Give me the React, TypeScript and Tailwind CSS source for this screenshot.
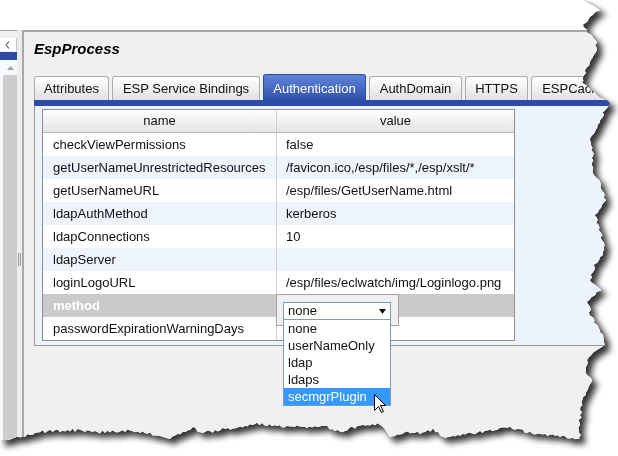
import React from "react";

function makeRng(seed: number) {
  let s = seed >>> 0;
  return () => {
    s = (Math.imul(s, 1664525) + 1013904223) >>> 0;
    return s / 4294967296;
  };
}

const RIGHT: [number, number][] = [
  [586, 0], [600, 10], [590, 17], [583, 27], [596, 40], [595, 53], [585, 73], [583, 83],
  [600, 97], [610, 103], [605, 110], [598, 125], [590, 140], [593, 158], [592, 170],
  [600, 183], [605, 200], [595, 215], [600, 230], [605, 250], [595, 265], [590, 280],
  [600, 290], [588, 302], [590, 315], [600, 330], [605, 345], [590, 355], [585, 370],
  [592, 380], [583, 400], [580, 420], [580, 440],
];

const BOTTOM: [number, number][] = [
  [580, 440], [570, 438], [530, 433], [510, 427], [480, 432], [443, 437], [433, 430],
  [420, 433], [410, 432], [390, 437], [380, 424], [350, 428], [340, 432], [327, 427],
  [287, 427], [257, 424], [233, 428], [200, 433], [193, 427], [170, 438], [150, 434],
  [130, 431], [100, 432], [70, 430], [40, 432], [20, 437], [0, 442],
];

function buildClip() {
  const rnd = makeRng(12345);
  const pts: string[] = ["0px 0px"];
  for (let i = 0; i < RIGHT.length - 1; i++) {
    const [x0, y0] = RIGHT[i];
    const [x1, y1] = RIGHT[i + 1];
    const n = Math.max(1, Math.round(Math.abs(y1 - y0) / 2.5));
    for (let k = 0; k < n; k++) {
      const t = k / n;
      const jx = (rnd() - 0.5) * 3.2;
      pts.push(`${(x0 + (x1 - x0) * t + jx).toFixed(1)}px ${(y0 + (y1 - y0) * t).toFixed(1)}px`);
    }
  }
  for (let i = 0; i < BOTTOM.length - 1; i++) {
    const [x0, y0] = BOTTOM[i];
    const [x1, y1] = BOTTOM[i + 1];
    const n = Math.max(1, Math.round(Math.abs(x1 - x0) / 2.5));
    for (let k = 0; k < n; k++) {
      const t = k / n;
      const jy = (rnd() - 0.5) * 3.2;
      pts.push(`${(x0 + (x1 - x0) * t).toFixed(1)}px ${(y0 + (y1 - y0) * t + jy).toFixed(1)}px`);
    }
  }
  pts.push("0px 442px");
  return `polygon(${pts.join(",")})`;
}

const rows: { name: string; value: string }[] = [
  { name: "checkViewPermissions", value: "false" },
  { name: "getUserNameUnrestrictedResources", value: "/favicon.ico,/esp/files/*,/esp/xslt/*" },
  { name: "getUserNameURL", value: "/esp/files/GetUserName.html" },
  { name: "ldapAuthMethod", value: "kerberos" },
  { name: "ldapConnections", value: "10" },
  { name: "ldapServer", value: "" },
  { name: "loginLogoURL", value: "/esp/files/eclwatch/img/Loginlogo.png" },
  { name: "method", value: "" },
  { name: "passwordExpirationWarningDays", value: "" },
];

const options = ["none", "userNameOnly", "ldap", "ldaps", "secmgrPlugin"];

function Sidebar() {
  return (
    <div className="w-[17px] shrink-0 flex flex-col border-t border-[#a0a0a0] bg-[#f0f0f0]">
      <div className="h-[7px]" />
      <div className="h-[13px] bg-white border-r border-[#c4c4c4] flex items-center pl-[5px]">
        <svg width="5" height="8" viewBox="0 0 5 8">
          <path d="M4 0.5 L1 4 L4 7.5" fill="none" stroke="#808080" strokeWidth="1.3" />
        </svg>
      </div>
      <div className="h-[8px] mt-[1px] bg-[#2e4ba6]" />
      <div className="flex-1 flex bg-[#f6f9fd]">
        <div className="w-[3px]" />
        <div className="flex-1 flex flex-col">
          <div className="h-[15px] flex items-center justify-center">
            <svg width="7" height="4" viewBox="0 0 7 4">
              <path d="M0 4 L3.5 0 L7 4 Z" fill="#a0a0a0" />
            </svg>
          </div>
          <div className="flex-1 bg-[#cdcdcd]" />
        </div>
      </div>
    </div>
  );
}

function Splitter() {
  return (
    <div className="w-[5px] shrink-0 flex flex-col items-center bg-[#ececec] pt-[223px]">
      <div className="flex gap-[1px]">
        <div className="w-px h-[13px] bg-[#9a9a9a]" />
        <div className="w-px h-[13px] bg-[#9a9a9a]" />
      </div>
    </div>
  );
}

function Tab({ label, w, active }: { label: string; w: string; active?: boolean }) {
  if (active) {
    return (
      <div
        className={`${w} h-[26px] pt-[2px] shrink-0 flex items-center justify-center rounded-t-[3px] border border-b-0 border-[#2d4aa0] bg-gradient-to-b from-[#5f83db] to-[#3251ab] text-white`}
      >
        {label}
      </div>
    );
  }
  return (
    <div
      className={`${w} h-[24px] shrink-0 flex items-center justify-center rounded-t-[3px] border border-b-0 border-[#ababab] bg-gradient-to-b from-white to-[#e1e1e1] text-[#111]`}
    >
      {label}
    </div>
  );
}

function Dropdown() {
  return (
    <div className="absolute left-[-1px] top-0 w-[123px] h-[32px] border border-[#a3a3a3] bg-[#f0f0f0] z-10">
      <div className="absolute left-[6px] top-[7px] w-[108px]">
        <div className="h-[18px] border border-[#7b9bc4] bg-white flex items-center justify-between pl-[4px] pr-[4px] text-[#111]">
          <span>none</span>
          <svg width="7" height="5" viewBox="0 0 7 5">
            <path d="M0 0 L7 0 L3.5 5 Z" fill="#111" />
          </svg>
        </div>
        <div className="border border-t-0 border-[#7b9bc4] bg-white">
          {options.map((o) => (
            <div
              key={o}
              className={`h-[17px] flex items-center pl-[4px] ${
                o === "secmgrPlugin" ? "bg-[#3399ff] text-white" : "text-[#111]"
              }`}
            >
              {o}
            </div>
          ))}
        </div>
        <svg
          className="absolute left-[91px] top-[92px]"
          width="13"
          height="20"
          viewBox="0 0 13 20"
        >
          <path
            d="M0.5 0.5 V16.5 L4.5 12.5 L7.5 18.5 L9.5 17.5 L6.5 11.5 H11.5 Z"
            fill="#fff"
            stroke="#000"
            strokeWidth="1"
            strokeLinejoin="miter"
          />
        </svg>
      </div>
    </div>
  );
}

function Table() {
  return (
    <div className="w-[473px] border border-[#8e8e8e] bg-white">
      <div className="flex h-[23px] border-b border-[#b8b8b8] bg-gradient-to-b from-white to-[#e4e4e4]">
        <div className="w-[233px] flex items-center justify-center text-[#111]">name</div>
        <div className="w-px bg-[#d2d2d2]" />
        <div className="flex-1 flex items-center justify-center text-[#111]">value</div>
      </div>
      {rows.map((r, i) => {
        const selected = r.name === "method";
        const bg = selected ? "bg-[#cacaca]" : i % 2 === 1 ? "bg-[#eef4fd]" : "bg-white";
        return (
          <div key={r.name} className={`flex h-[23px] ${bg}`}>
            <div
              className={`w-[233px] flex items-center pl-[10px] whitespace-nowrap ${
                selected ? "text-white font-bold" : "text-[#111]"
              }`}
            >
              {r.name}
            </div>
            <div className="w-px bg-[#cfcfcf]" />
            <div className="relative flex-1 flex items-center pl-[9px] whitespace-nowrap text-[#111]">
              {r.value}
              {selected && <Dropdown />}
            </div>
          </div>
        );
      })}
    </div>
  );
}

function Main() {
  return (
    <div className="flex-1 min-w-0 flex flex-col border-l-2 border-t-2 border-[#a8a8a8] bg-[#f0f0f0] pl-[10px]">
      <div className="pt-[8px] h-[26px] text-[15px] leading-[18px] font-bold italic text-black">
        EspProcess
      </div>
      <div className="mt-[16px] h-[26px] flex items-end gap-[3px] whitespace-nowrap">
        <Tab label="Attributes" w="w-[75px]" />
        <Tab label="ESP Service Bindings" w="w-[148px]" />
        <Tab label="Authentication" w="w-[103px]" active />
        <Tab label="AuthDomain" w="w-[93px]" />
        <Tab label="HTTPS" w="w-[63px]" />
        <Tab label="ESPCache" w="w-[86px]" />
      </div>
      <div className="h-[6px] bg-[#2e4ba6]" />
      <div className="border-l border-b border-[#999] bg-[#edf3fd] pl-[7px] pt-[3px] pb-[4px]">
        <Table />
      </div>
    </div>
  );
}

export default function App() {
  const clip = React.useMemo(buildClip, []);
  return (
    <div className="relative w-[618px] h-[456px] overflow-hidden bg-white text-[13px] [font-family:'Liberation_Sans',Arial,sans-serif]">
      <div className="w-full h-full [filter:drop-shadow(0_0_0.6px_rgba(0,0,0,0.95))_drop-shadow(5px_5px_3px_rgba(0,0,0,0.8))]">
        <div className="w-full h-full flex flex-col bg-white" style={{ clipPath: clip }}>
          <div className="h-[30px] shrink-0" />
          <div className="flex flex-1 min-h-0">
            <Sidebar />
            <Splitter />
            <Main />
          </div>
        </div>
      </div>
    </div>
  );
}
